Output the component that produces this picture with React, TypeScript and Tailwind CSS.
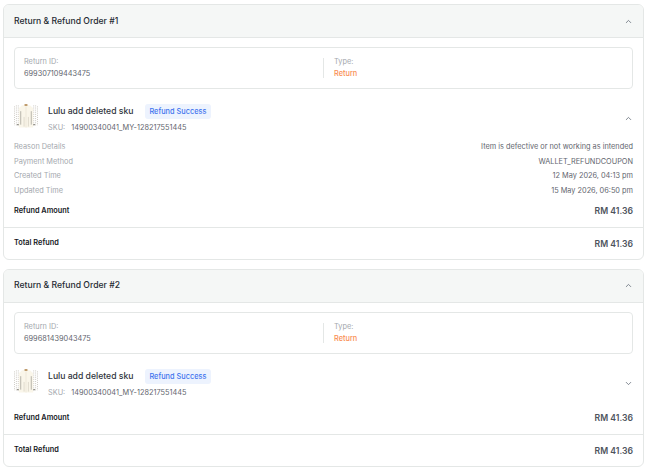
import React from "react"
import { ChevronDown, ChevronUp } from "lucide-react"

type Order = {
  no: number
  returnId: string
  expanded: boolean
}

const orders: Order[] = [
  { no: 1, returnId: "699307109443475", expanded: true },
  { no: 2, returnId: "699681439043475", expanded: false },
]

const details = [
  ["Reason Details", "Item is defective or not working as intended"],
  ["Payment Method", "WALLET_REFUNDCOUPON"],
  ["Created Time", "12 May 2026, 04:13 pm"],
  ["Updated Time", "15 May 2026, 06:50 pm"],
]

// tiny product photo: a pale shirt on a speckled backdrop
const ShirtThumb = () => (
  <svg width="24" height="26" viewBox="0 0 25 26" className="shrink-0">
    <rect width="25" height="26" fill="#ffffff" />
    <path d="M0.5 3v20M2.5 2v22M4.5 2v22M20.5 2v22M22.5 2v22M24.5 3v20" stroke="#c9c6be" strokeWidth="1" strokeDasharray="1 1.2" />
    <path d="M8 2l4-1 5 1 3 3v20h-15V5z" fill="#faf6ea" />
    <path d="M11 0.5h3v2h-3z" fill="#c09c6e" />
    <path d="M12.5 3v22" stroke="#e6e0d0" strokeWidth="0.6" />
    <path d="M7 8v14M18 8v14" stroke="#b4b2a8" strokeWidth="1" />
    <path d="M10.5 14v10M15 14v10" stroke="#d2cebf" strokeWidth="0.7" />
    <path d="M3 22h2M20 22h2" stroke="#94928a" strokeWidth="1.2" />
  </svg>
)

const OrderCard = ({ order }: { order: Order }) => {
  return (
    <div className="overflow-hidden rounded-md border border-[#e4e7e6] bg-white">
      <div className="flex h-[33px] items-center justify-between border-b border-[#e4e7e6] bg-[#f5f7f6] px-[10px]">
        <div className="text-[8.65px] font-medium text-[#262b33]">Return &amp; Refund Order #{order.no}</div>
        <ChevronUp className="size-[9px] text-[#5b6470]" />
      </div>

      <div className="px-[10px] pt-[9px]">
        <div className="flex h-[42px] items-center rounded-[4px] border border-[#e4e7e6]">
          <div className="flex w-[308px] flex-col pl-[9px] text-[7.35px] leading-[12px]">
            <div className="text-[#a3a7ad]">Return ID:</div>
            <div className="text-[#5f656e]">{order.returnId}</div>
          </div>
          <div className="flex h-[20px] flex-col justify-center border-l border-[#e4e7e6] pl-[10px] text-[7.35px] leading-[12px]">
            <div className="text-[#a3a7ad]">Type:</div>
            <div className="font-medium text-[#f98d52]">Return</div>
          </div>
        </div>

        <div className="mt-[14px] flex items-center justify-between">
          <div className="flex items-start gap-[10px]">
            <ShirtThumb />
            <div className="mt-[1px] flex flex-col gap-[3px]">
              <div className="flex items-center gap-[11.5px]">
                <span className="text-[8.65px] font-medium text-[#30353d]">Lulu add deleted sku</span>
                <span className="rounded-[3px] bg-[#edf3fe] px-[4.5px] py-[2px] text-[7.35px] leading-[11px] font-medium text-[#3f74ee]">Refund Success</span>
              </div>
              <div className="flex gap-[6px] text-[7.35px] leading-[12px]">
                <span className="text-[#a3a7ad]">SKU:</span>
                <span className="text-[#5f656e]">14900340041_MY-128217551445</span>
              </div>
            </div>
          </div>
          {order.expanded ? (
            <ChevronUp className="size-[9px] text-[#5b6470]" />
          ) : (
            <ChevronDown className="size-[9px] text-[#5b6470]" />
          )}
        </div>

        {order.expanded && (
          <div className="mt-[7px] flex flex-col gap-[2.6px]">
            {details.map(([label, value]) => (
              <div key={label} className="flex justify-between text-[7.35px] leading-[12px]">
                <span className="text-[#a3a7ad]">{label}</span>
                <span className="text-[#5f656e]">{value}</span>
              </div>
            ))}
          </div>
        )}

        <div className={`${order.expanded ? "mt-[7px]" : "mt-[12px]"} flex h-[23px] justify-between`}>
          <span className="mt-[1px] text-[7.35px] leading-[12px] font-semibold text-[#15181d]">Refund Amount</span>
          <span className="mt-[1px] text-[8.65px] leading-[12px] font-semibold text-[#4e545d]">RM 41.36</span>
        </div>
      </div>

      <div className="flex h-[32px] justify-between border-t border-[#e4e7e6] px-[10px] pt-[9px]">
        <span className="text-[7.35px] leading-[12px] font-semibold text-[#15181d]">Total Refund</span>
        <span className="mt-[1px] text-[8.65px] leading-[12px] font-semibold text-[#4e545d]">RM 41.36</span>
      </div>
    </div>
  )
}

export default function App() {
  return (
    <div className="h-[470px] w-[650px] overflow-hidden bg-white pl-[3px] pt-[4px] font-['Inter',sans-serif]">
      <div className="flex w-[641px] flex-col gap-[9px]">
        {orders.map((order) => (
          <OrderCard key={order.no} order={order} />
        ))}
      </div>
    </div>
  )
}
